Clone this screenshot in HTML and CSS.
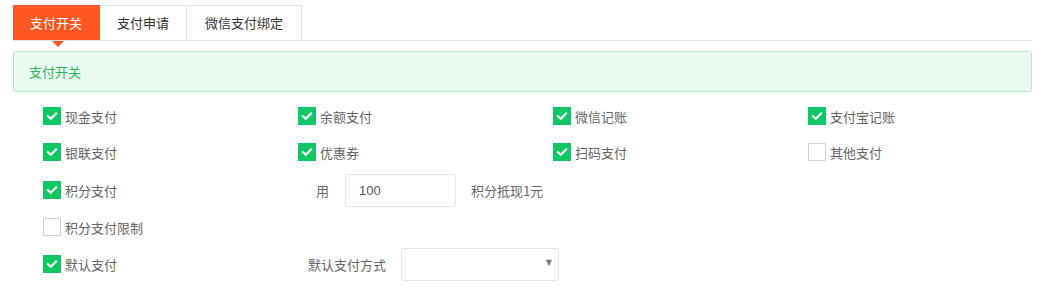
FILE: index.html
```
<!DOCTYPE html>
<html lang="zh-CN">
<head>
<meta charset="utf-8">
<title>支付开关</title>
<link rel="stylesheet" href="styles.css">
</head>
<body>
<div class="page">
  <div class="tabs">
    <div class="tab active">支付开关</div>
    <div class="tab">支付申请</div>
    <div class="tab wide">微信支付绑定</div>
  </div>
  <div class="alert">支付开关</div>
  <div class="form">
    <div class="row r1">
      <label class="cell"><span class="cb on"><svg viewBox="0 0 18 18"><path d="M4.5 9.2 L7.7 12.2 L13.5 6.2" /></svg></span>现金支付</label>
      <label class="cell"><span class="cb on"><svg viewBox="0 0 18 18"><path d="M4.5 9.2 L7.7 12.2 L13.5 6.2" /></svg></span>余额支付</label>
      <label class="cell"><span class="cb on"><svg viewBox="0 0 18 18"><path d="M4.5 9.2 L7.7 12.2 L13.5 6.2" /></svg></span>微信记账</label>
      <label class="cell"><span class="cb on"><svg viewBox="0 0 18 18"><path d="M4.5 9.2 L7.7 12.2 L13.5 6.2" /></svg></span>支付宝记账</label>
    </div>
    <div class="row r2">
      <label class="cell"><span class="cb on"><svg viewBox="0 0 18 18"><path d="M4.5 9.2 L7.7 12.2 L13.5 6.2" /></svg></span>银联支付</label>
      <label class="cell"><span class="cb on"><svg viewBox="0 0 18 18"><path d="M4.5 9.2 L7.7 12.2 L13.5 6.2" /></svg></span>优惠券</label>
      <label class="cell"><span class="cb on"><svg viewBox="0 0 18 18"><path d="M4.5 9.2 L7.7 12.2 L13.5 6.2" /></svg></span>扫码支付</label>
      <label class="cell"><span class="cb"></span>其他支付</label>
    </div>
    <div class="row r3">
      <label class="cell"><span class="cb on"><svg viewBox="0 0 18 18"><path d="M4.5 9.2 L7.7 12.2 L13.5 6.2" /></svg></span>积分支付</label>
      <div class="cell span3">
        <span class="lbl-use">用</span>
        <input class="inp" type="text" value="100">
        <span class="after">积分抵现1元</span>
      </div>
    </div>
    <div class="row r4">
      <label class="cell"><span class="cb"></span>积分支付限制</label>
    </div>
    <div class="row r5">
      <label class="cell"><span class="cb on"><svg viewBox="0 0 18 18"><path d="M4.5 9.2 L7.7 12.2 L13.5 6.2" /></svg></span>默认支付</label>
      <div class="cell span3">
        <span class="lbl-def">默认支付方式</span>
        <div class="sel"><span class="caret">▼</span></div>
      </div>
    </div>
  </div>
</div>
</body>
</html>
```
FILE: styles.css
```
* { box-sizing: border-box; }
html, body { margin: 0; padding: 0; background: #fff; overflow: hidden; }
body {
  font-family: "Noto Sans CJK SC", "Noto Sans", "Liberation Sans", sans-serif;
  font-size: 13px;
  color: #666;
}
.page { padding: 5px 10px 0 13px; }

.tabs {
  display: flex;
  height: 36px;
  border-bottom: 1px solid #e2e2e2;
}
.tab {
  position: relative;
  width: 87px;
  height: 35px;
  line-height: 34px;
  text-align: center;
  color: #333;
  border: 1px solid #e2e2e2;
  border-left: none;
  border-bottom: none;
  background: #fff;
}
.tab.wide { width: 115px; }
.tab.active {
  background: #ff5722;
  border-color: #ff5722;
  color: #fff;
}
.tab.active::after {
  content: "";
  position: absolute;
  left: 39px;
  top: 35px;
  border-left: 6px solid transparent;
  border-right: 6px solid transparent;
  border-top: 6px solid #ff5722;
}

.alert {
  margin-top: 10px;
  height: 41px;
  line-height: 39px;
  padding-left: 15px;
  background: #ebfaf0;
  border: 1px solid #b5e8c5;
  border-radius: 3px;
  color: #2db55d;
}

.form { padding: 6px 0 0 30px; }
.row { display: flex; align-items: center; }
.r1 { height: 36px; }
.r2 { height: 36px; }
.r3 { height: 40px; }
.r4 { height: 34px; }
.r5 { height: 40px; }

.cell {
  flex: none;
  width: 255px;
  display: flex;
  align-items: center;
  white-space: nowrap;
  color: #666;
}
.span3 { width: auto; }

.cb {
  width: 18px;
  height: 18px;
  margin-right: 4px;
  border: 1px solid #d2d0cb;
  background: #fff;
  flex: none;
  display: flex;
}
.cb.on { background: #0fc865; border-color: #0fc865; }
.cb svg { width: 16px; height: 16px; }
.cb path { fill: none; stroke: #fff; stroke-width: 2.4; stroke-linecap: square; }

.lbl-use { margin-left: 18px; width: 29px; }
.inp {
  width: 111px;
  height: 33px;
  border: 1px solid #e6e6e6;
  border-radius: 2px;
  padding: 0 13px;
  font: inherit;
  font-family: "Liberation Sans", "Noto Sans CJK SC", sans-serif;
  font-size: 13px;
  color: #555;
  outline: none;
}
.after { margin-left: 15px; }

.lbl-def { margin-left: 10px; width: 93px; }
.sel {
  position: relative;
  width: 158px;
  height: 33px;
  border: 1px solid #e6e6e6;
  border-radius: 2px;
  background: #fff;
}
.caret {
  position: absolute;
  right: 6px;
  top: 9px;
  font-size: 8px;
  color: #777;
  font-family: "DejaVu Sans", sans-serif;
}
```
